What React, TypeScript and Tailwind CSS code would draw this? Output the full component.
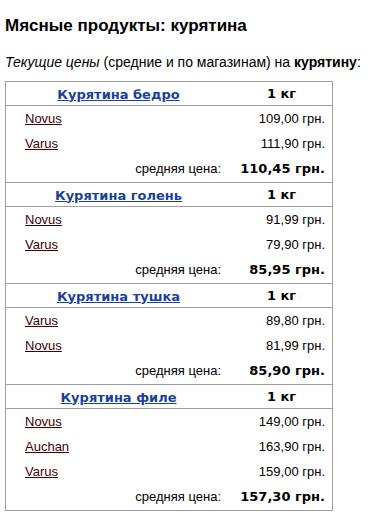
import React from "react";

type Section = { name: string; stores: [string, string][]; avg: string };

const sections: Section[] = [
  { name: "Курятина бедро", stores: [["Novus", "109,00 грн."], ["Varus", "111,90 грн."]], avg: "110,45 грн." },
  { name: "Курятина голень", stores: [["Novus", "91,99 грн."], ["Varus", "79,90 грн."]], avg: "85,95 грн." },
  { name: "Курятина тушка", stores: [["Varus", "89,80 грн."], ["Novus", "81,99 грн."]], avg: "85,90 грн." },
  { name: "Курятина филе", stores: [["Novus", "149,00 грн."], ["Auchan", "163,90 грн."], ["Varus", "159,00 грн."]], avg: "157,30 грн." },
];

const arial = { fontFamily: '"Liberation Sans", Arial, sans-serif' };
const verdana = { fontFamily: '"DejaVu Sans", Verdana, sans-serif' };

export default function App() {
  return (
    <div className="bg-white text-black w-[377px] h-[519px] overflow-hidden pl-[5px]" style={arial}>
      <h1 className="text-[17px] font-bold leading-[20px] pt-[16px]">Мясные продукты: курятина</h1>
      <p className="text-[14px] leading-[17px] mt-[18px]">
        <i>Текущие цены</i> (средние и по магазинам) на <b>курятину</b>:
      </p>
      <div className="mt-[10px] w-[328px] border border-[#a0a0a0] border-b-0">
        {sections.map((s) => (
          <div key={s.name} className="border-b border-[#a0a0a0]">
            <div className="flex h-[24px] items-center border-b border-[#a0a0a0]" style={verdana}>
              <div className="w-[225px] text-center">
                <a href="#" className="text-[13px] font-bold underline text-[#1a3f9e]">{s.name}</a>
              </div>
              <div className="flex-1 text-center text-[13px] font-bold">1 кг</div>
            </div>
            {s.stores.map(([store, price]) => (
              <div key={store} className="flex h-[25px] items-center text-[13px]">
                <div className="w-[225px] pl-[19px]">
                  <a href="#" className="underline text-[#400000]">{store}</a>
                </div>
                <div className="flex-1 text-right pr-[7px]">{price}</div>
              </div>
            ))}
            <div className="flex h-[26px] items-center">
              <div className="w-[225px] text-right pr-[10px] text-[13px]">средняя цена:</div>
              <div className="flex-1 text-right pr-[7px] text-[13px] font-bold" style={verdana}>{s.avg}</div>
            </div>
          </div>
        ))}
      </div>
    </div>
  );
}
